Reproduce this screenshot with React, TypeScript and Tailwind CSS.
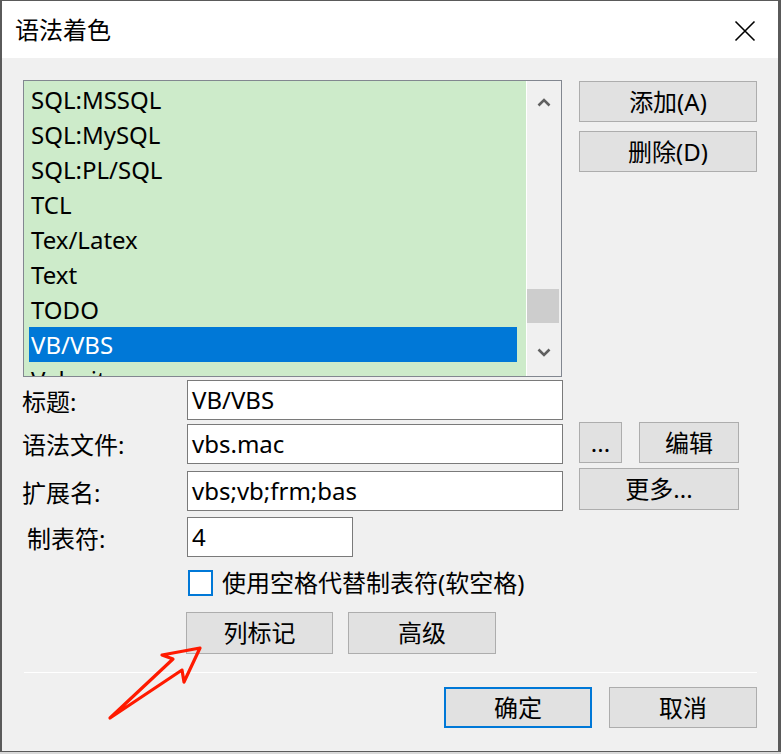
import React from "react";

const FONT = "font-['Noto_Sans','Noto_Sans_CJK_SC',sans-serif]";

function Btn({ children, className = "", def = false }: { children: React.ReactNode; className?: string; def?: boolean }) {
  return (
    <div
      className={`flex items-center justify-center bg-[#e1e1e1] text-[24px] leading-none text-black ${
        def ? "border-2 border-[#0078d7]" : "border border-[#adadad]"
      } ${className}`}
    >
      {children}
    </div>
  );
}

function Input({ value, className = "" }: { value: string; className?: string }) {
  return (
    <div className={`flex h-[40px] items-center border border-[#7a7a7a] bg-white pl-[4px] text-[24px] leading-none text-black ${className}`}>
      {value}
    </div>
  );
}

const items = ["SQL:MSSQL", "SQL:MySQL", "SQL:PL/SQL", "TCL", "Tex/Latex", "Text", "TODO", "VB/VBS", "Velocity"];

export default function App() {
  return (
    <div className={`relative h-[754px] w-[781px] overflow-hidden bg-[#d8d8d8] ${FONT}`}>
      <div className="flex h-[752px] w-[781px] flex-col border-t border-l-2 border-r-[3px] border-b border-[#5a5a5a]">
        {/* Title bar */}
        <div className="flex h-[57px] shrink-0 items-center justify-between bg-white pl-[13px] pr-[22px]">
          <span className="text-[24px] leading-none text-black">语法着色</span>
          <svg width="22" height="22" viewBox="0 0 22 22" className="mt-[2px]">
            <path d="M1.5 1.5 L20.5 20.5 M20.5 1.5 L1.5 20.5" stroke="#000" strokeWidth="1.6" fill="none" />
          </svg>
        </div>

        {/* Client area */}
        <div className="flex flex-1 flex-col bg-[#f0f0f0] pl-[20px] pt-[22px]">
          {/* Top row: list + buttons */}
          <div className="flex">
            <div className="ml-[1px] flex h-[297px] w-[539px] border border-[#828790] bg-[#cdebca]">
              <div className="flex-1 overflow-hidden pt-[1px]">
                {items.map((it) => {
                  const sel = it === "VB/VBS";
                  return (
                    <div
                      key={it}
                      className={`ml-[5px] flex h-[35px] w-[488px] items-center pl-[2px] text-[24px] leading-none ${
                        sel ? "bg-[#0078d7] text-white" : "text-black"
                      }`}
                    >
                      {it}
                    </div>
                  );
                })}
              </div>
              <div className="flex w-[35px] flex-col border-l border-white bg-[#f0f0f0]">
                <div className="flex h-[40px] items-center justify-center pt-[2px]">
                  <svg width="14" height="9" viewBox="0 0 14 9">
                    <path d="M1.5 7.5 L7 2 L12.5 7.5" stroke="#606060" strokeWidth="2.6" fill="none" />
                  </svg>
                </div>
                <div className="mt-[168px] h-[34px] w-[32px] bg-[#cdcdcd]" />
                <div className="flex flex-1 items-center justify-center pt-[6px]">
                  <svg width="14" height="9" viewBox="0 0 14 9">
                    <path d="M1.5 1.5 L7 7 L12.5 1.5" stroke="#606060" strokeWidth="2.6" fill="none" />
                  </svg>
                </div>
              </div>
            </div>
            <div className="ml-[17px] mt-[1px] flex w-[178px] flex-col gap-[9px]">
              <Btn className="h-[41px]">添加(A)</Btn>
              <Btn className="h-[41px]">删除(D)</Btn>
            </div>
          </div>

          {/* 标题 */}
          <div className="mt-[3px] flex h-[40px] items-center">
            <div className="w-[165px] pt-[3px] text-[24px] leading-none text-black">标题:</div>
            <Input value="VB/VBS" className="w-[376px]" />
          </div>

          {/* 语法文件 */}
          <div className="mt-[2px] flex h-[42px] items-start">
            <div className="flex h-[42px] w-[165px] items-center pt-[3px] text-[24px] leading-none text-black">语法文件:</div>
            <Input value="vbs.mac" className="mt-[2px] w-[376px]" />
            <Btn className="ml-[16px] h-[41px] w-[43px]">...</Btn>
            <Btn className="ml-[17px] h-[41px] w-[100px]">编辑</Btn>
          </div>

          {/* 扩展名 */}
          <div className="mt-[4px] flex h-[43px] items-start">
            <div className="flex h-[43px] w-[165px] items-center pt-[6px] text-[24px] leading-none text-black">扩展名:</div>
            <Input value="vbs;vb;frm;bas" className="mt-[3px] w-[376px]" />
            <Btn className="ml-[16px] h-[42px] w-[160px]">更多...</Btn>
          </div>

          {/* 制表符 */}
          <div className="mt-[6px] flex h-[40px] items-center">
            <div className="w-[165px] pl-[5px] pt-[3px] text-[24px] leading-none text-black">制表符:</div>
            <Input value="4" className="w-[166px]" />
          </div>

          {/* checkbox */}
          <div className="ml-[166px] mt-[13px] flex h-[26px] items-center">
            <div className="h-[26px] w-[25px] border-2 border-[#0078d7] bg-white" />
            <span className="ml-[9px] text-[24px] leading-none text-black">使用空格代替制表符(软空格)</span>
          </div>

          {/* 列标记 / 高级 */}
          <div className="ml-[164px] mt-[16px] flex">
            <Btn className="h-[42px] w-[147px]">列标记</Btn>
            <Btn className="ml-[15px] h-[42px] w-[148px]">高级</Btn>
          </div>

          {/* separator */}
          <div className="ml-[2px] mt-[18px] h-px w-[733px] bg-white" />

          {/* OK / Cancel */}
          <div className="ml-[422px] mt-[14px] flex">
            <Btn def className="h-[41px] w-[148px]">确定</Btn>
            <Btn className="ml-[17px] h-[41px] w-[148px]">取消</Btn>
          </div>
        </div>
      </div>

      {/* red annotation arrow */}
      <svg className="pointer-events-none absolute left-0 top-0" width="781" height="754" viewBox="0 0 781 754">
        <polygon
          points="110,718 173,659 162,655 200,648 184,682 182,670"
          fill="none"
          stroke="#ff1a00"
          strokeWidth="3.2"
          strokeLinejoin="round"
        />
      </svg>
    </div>
  );
}
